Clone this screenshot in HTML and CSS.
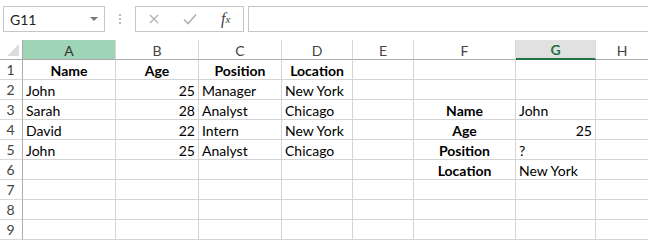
FILE: index.html
```html
<!DOCTYPE html>
<html lang="en">
<head>
    <meta charset="UTF-8">
    <title>Sheet</title>
    <link rel="stylesheet" href="styles.css">
</head>
<body>
    <div class="formula-row">
        <div class="name-box">
            <span>G11</span>
            <span class="drop"></span>
        </div>
        <div class="grip">
            <span></span><span></span><span></span>
        </div>
        <div class="fx-buttons">
            <svg class="ico cancel" width="10" height="10" viewBox="0 0 10 10">
                <path d="M1 1 L9 9 M9 1 L1 9" stroke="#b0b0b0" stroke-width="1.3" fill="none"/>
            </svg>
            <svg class="ico enter" width="14" height="12" viewBox="0 0 14 12">
                <path d="M1 6.5 L5 10.5 L13 1.5" stroke="#b0b0b0" stroke-width="1.6" fill="none"/>
            </svg>
            <span class="fx">f<sub>x</sub></span>
        </div>
        <div class="formula-input"></div>
    </div>

    <div class="sheet">
        <div class="hd corner"><span class="tri"></span></div>
        <div class="hd col active-col">A</div>
        <div class="hd col">B</div>
        <div class="hd col">C</div>
        <div class="hd col">D</div>
        <div class="hd col">E</div>
        <div class="hd col">F</div>
        <div class="hd col sel-col">G</div>
        <div class="hd col last">H</div>

        <div class="hd row">1</div>
        <div class="c b ctr">Name</div><div class="c b ctr">Age</div><div class="c b ctr">Position</div><div class="c b ctr">Location</div>
        <div class="c"></div><div class="c"></div><div class="c"></div><div class="c last"></div>

        <div class="hd row">2</div>
        <div class="c">John</div><div class="c num">25</div><div class="c">Manager</div><div class="c">New York</div>
        <div class="c"></div><div class="c"></div><div class="c"></div><div class="c last"></div>

        <div class="hd row">3</div>
        <div class="c">Sarah</div><div class="c num">28</div><div class="c">Analyst</div><div class="c">Chicago</div>
        <div class="c"></div><div class="c b ctr">Name</div><div class="c">John</div><div class="c last"></div>

        <div class="hd row">4</div>
        <div class="c">David</div><div class="c num">22</div><div class="c">Intern</div><div class="c">New York</div>
        <div class="c"></div><div class="c b ctr">Age</div><div class="c num">25</div><div class="c last"></div>

        <div class="hd row">5</div>
        <div class="c">John</div><div class="c num">25</div><div class="c">Analyst</div><div class="c">Chicago</div>
        <div class="c"></div><div class="c b ctr">Position</div><div class="c">?</div><div class="c last"></div>

        <div class="hd row">6</div>
        <div class="c"></div><div class="c"></div><div class="c"></div><div class="c"></div>
        <div class="c"></div><div class="c b ctr">Location</div><div class="c">New York</div><div class="c last"></div>

        <div class="hd row">7</div>
        <div class="c"></div><div class="c"></div><div class="c"></div><div class="c"></div>
        <div class="c"></div><div class="c"></div><div class="c"></div><div class="c last"></div>

        <div class="hd row">8</div>
        <div class="c"></div><div class="c"></div><div class="c"></div><div class="c"></div>
        <div class="c"></div><div class="c"></div><div class="c"></div><div class="c last"></div>

        <div class="hd row">9</div>
        <div class="c"></div><div class="c"></div><div class="c"></div><div class="c"></div>
        <div class="c"></div><div class="c"></div><div class="c"></div><div class="c last"></div>
    </div>
</body>
</html>
```

FILE: styles.css
```css
* {
    box-sizing: border-box;
}

body {
    margin: 0;
    background-color: #ffffff;
    font-family: 'Lato', 'Liberation Sans', sans-serif;
    color: #000;
    overflow: hidden;
}

.formula-row {
    display: flex;
    align-items: center;
    height: 40px;
    padding: 4px 0 6px 3px;
}

.name-box {
    display: flex;
    align-items: center;
    justify-content: space-between;
    width: 102px;
    height: 26px;
    border: 1px solid #c6c6c6;
    padding: 0 6px 0 6px;
    font-size: 14px;
    color: #222;
}

.drop {
    width: 0;
    height: 0;
    border-left: 4px solid transparent;
    border-right: 4px solid transparent;
    border-top: 4px solid #777;
}

.grip {
    display: flex;
    flex-direction: column;
    gap: 2px;
    width: 30px;
    align-items: center;
}

.grip span {
    width: 2px;
    height: 2px;
    background-color: #bbb;
}

.fx-buttons {
    display: flex;
    align-items: center;
    width: 109px;
    height: 26px;
    border: 1px solid #c6c6c6;
    padding-left: 13px;
}

.enter {
    margin-left: 24px;
}

.fx {
    margin-left: 24px;
    font-family: 'Liberation Serif', serif;
    font-style: italic;
    font-size: 16px;
    color: #444;
}

.fx sub {
    font-size: 11px;
    vertical-align: 1px;
}

.formula-input {
    flex: 1;
    height: 26px;
    margin-left: 4px;
    border: 1px solid #c6c6c6;
    border-right: none;
}

.sheet {
    display: grid;
    grid-template-columns: 23px 93px 83px 83px 71px 61px 102px 80px 52px;
    grid-auto-rows: 20px;
}

.hd {
    display: flex;
    align-items: center;
    justify-content: center;
    font-size: 14px;
    color: #444;
    background-color: #fff;
}

.col {
    border-right: 1px solid #d8d8d8;
    border-bottom: 1px solid #ababab;
    padding-top: 1px;
}

.corner {
    position: relative;
    border-right: 1px solid #ababab;
    border-bottom: 1px solid #ababab;
}

.tri {
    position: absolute;
    right: 3px;
    bottom: 3px;
    width: 0;
    height: 0;
    border-left: 12px solid transparent;
    border-bottom: 12px solid #dcdcdc;
}

.active-col {
    background-color: #9fd5b7;
    color: #333;
}

.sel-col {
    background-color: #e1e1e1;
    color: #217346;
    font-weight: bold;
    border-bottom: 2px solid #217346;
}

.row {
    border-right: 1px solid #ababab;
    border-bottom: 1px solid #d8d8d8;
    padding-right: 1px;
}

.c {
    display: flex;
    align-items: center;
    padding: 1px 3px 0 3px;
    font-size: 14px;
    white-space: nowrap;
    border-right: 1px solid #d4d4d4;
    border-bottom: 1px solid #d4d4d4;
}

.last {
    border-right: none;
}

.b {
    font-weight: bold;
}

.ctr {
    justify-content: center;
}

.num {
    justify-content: flex-end;
}
```
